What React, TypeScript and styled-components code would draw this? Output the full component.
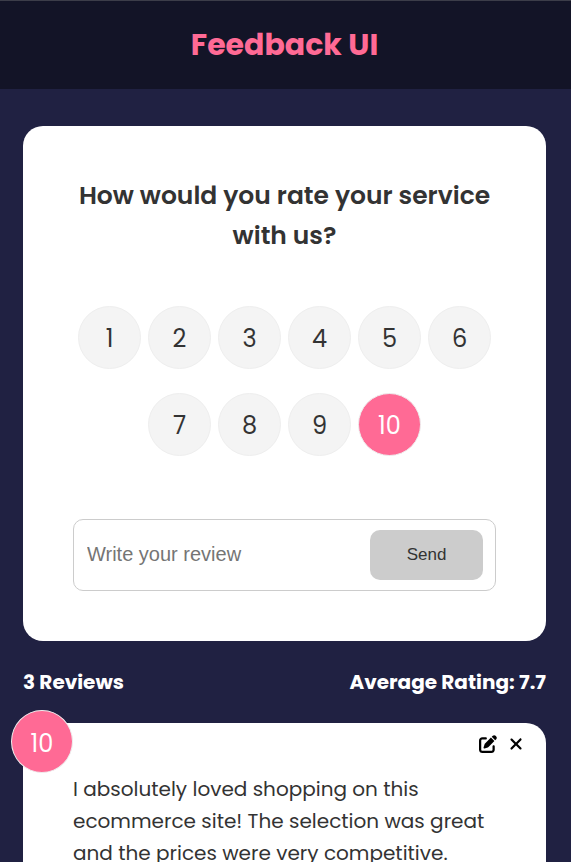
import React, { useState } from "react";
import styled, { createGlobalStyle } from "styled-components";
import { FaPenToSquare, FaXmark } from "react-icons/fa6";

const GlobalStyle = createGlobalStyle`
  *, *::before, *::after { box-sizing: border-box; }
  body {
    margin: 0;
    background: #202142;
    color: #333;
    font-family: Poppins, Inter, sans-serif;
    font-size: 20px;
    line-height: 32px;
  }
`;

const Header = styled.header`
  padding: 24px 18px 24px 16px;
  border-top: 1px solid #3c3d49;
  background: #131427;
  text-align: center;
`;

const Title = styled.h1`
  margin: 0;
  color: #ff6a95;
  font-size: 30px;
  line-height: 40px;
  font-weight: 700;
`;

const Main = styled.main`
  max-width: 768px;
  margin: 0 auto;
  padding: 37px 25px 37px 23px;
`;

const Card = styled.section`
  padding: 50px;
  border-radius: 20px;
  background: #fff;
`;

const Question = styled.h2`
  margin: 0 0 50px;
  font-size: 25px;
  line-height: 40px;
  font-weight: 600;
  text-align: center;
`;

const Ratings = styled.fieldset`
  display: flex;
  flex-wrap: wrap;
  justify-content: center;
  gap: 24px 7px;
  margin: 0 0 63px;
  padding: 0;
  border: 0;
`;

const RatingOption = styled.label<{ $selected: boolean }>`
  position: relative;
  display: grid;
  place-items: center;
  width: 63px;
  height: 63px;
  padding-top: 2px;
  border: 1px solid #eee;
  border-radius: 50%;
  background: ${(p) => (p.$selected ? "#ff6a95" : "#f4f4f4")};
  color: ${(p) => (p.$selected ? "#fff" : "#333")};
  font-size: 24px;
  cursor: pointer;
`;

const RatingInput = styled.input`
  position: absolute;
  inset: 0;
  width: 100%;
  height: 100%;
  margin: 0;
  opacity: 0;
  cursor: pointer;
`;

const ReviewField = styled.div`
  display: flex;
  align-items: center;
  padding: 10px 12px;
  border: 1px solid #ccc;
  border-radius: 10px;
`;

const ReviewInput = styled.input`
  flex: 1;
  min-width: 0;
  height: 40px;
  padding: 0 1px 2px;
  border: 0;
  outline: 0;
  background: transparent;
  color: #333;
  font: 20px "Liberation Sans", Arial, sans-serif;
  &::placeholder { color: #757575; }
`;

const SendButton = styled.button`
  width: 113px;
  height: 50px;
  border: 0;
  border-radius: 10px;
  background: #ccc;
  color: #333;
  font: 17px "Liberation Sans", Arial, sans-serif;
`;

const Stats = styled.div`
  display: flex;
  justify-content: space-between;
  gap: 16px;
  padding: 25px 0;
  color: #fff;
  font-weight: 700;
`;

const Stat = styled.p`
  margin: 0;
`;

const ReviewCard = styled.article`
  position: relative;
  padding: 50px;
  border-radius: 20px;
  background: #fff;
`;

const ScoreBadge = styled.div`
  position: absolute;
  top: -13px;
  left: -12px;
  display: grid;
  place-items: center;
  width: 62px;
  height: 63px;
  padding-top: 4px;
  border: 1px solid #eee;
  border-radius: 50%;
  background: #ff6a95;
  color: #fff;
  font-size: 24px;
`;

const Actions = styled.div`
  position: absolute;
  top: 12px;
  right: 21px;
  display: flex;
  gap: 10px;
`;

const IconButton = styled.button`
  display: grid;
  place-items: center;
  height: 18px;
  padding: 0;
  border: 0;
  background: transparent;
  color: #000;
  font-size: 18px;
  cursor: pointer;
`;

const ReviewText = styled.p`
  margin: 0;
`;

const scores = [1, 2, 3, 4, 5, 6, 7, 8, 9, 10];

export default function App() {
  const [rating, setRating] = useState(10);
  const [text, setText] = useState("");

  return (
    <>
      <GlobalStyle />
      <Header>
        <Title>Feedback UI</Title>
      </Header>
      <Main>
        <Card>
          <form onSubmit={(e) => e.preventDefault()}>
            <Question>How would you rate your service with us?</Question>
            <Ratings aria-label="Rating">
              {scores.map((score) => (
                <RatingOption key={score} $selected={score === rating}>
                  <RatingInput
                    type="radio"
                    name="rating"
                    value={score}
                    checked={score === rating}
                    onChange={() => setRating(score)}
                  />
                  {score}
                </RatingOption>
              ))}
            </Ratings>
            <ReviewField>
              <ReviewInput
                type="text"
                aria-label="Write your review"
                placeholder="Write your review"
                value={text}
                onChange={(e) => setText(e.target.value)}
              />
              <SendButton type="submit">Send</SendButton>
            </ReviewField>
          </form>
        </Card>
        <Stats>
          <Stat>3 Reviews</Stat>
          <Stat>Average Rating: 7.7</Stat>
        </Stats>
        <ReviewCard>
          <ScoreBadge>10</ScoreBadge>
          <Actions>
            <IconButton type="button" aria-label="Edit review">
              <FaPenToSquare />
            </IconButton>
            <IconButton type="button" aria-label="Delete review">
              <FaXmark />
            </IconButton>
          </Actions>
          <ReviewText>
            I absolutely loved shopping on this ecommerce site! The selection was great and the
            prices were very competitive.
          </ReviewText>
        </ReviewCard>
      </Main>
    </>
  );
}
